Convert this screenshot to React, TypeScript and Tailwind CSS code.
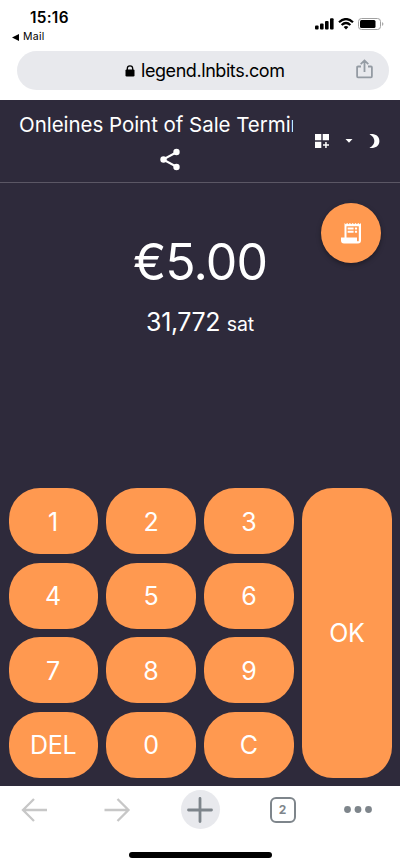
import React from 'react';

const keys = ['1', '2', '3', '4', '5', '6', '7', '8', '9', 'DEL', '0', 'C'];

function StatusBar() {
  return (
    <div className="flex h-[51px] justify-between pr-[16px] pl-[12px]">
      <div className="pt-[8px]">
        <div className="pl-[18px] text-[15.3px] leading-[19px] font-semibold tracking-[0.3px]">15:16</div>
        <div className="flex items-center gap-[4px] pt-[4px] text-[10.5px] leading-[12px] tracking-[0.25px]">
          <svg width="7" height="7" viewBox="0 0 7 7"><path d="M7 0v7L0 3.5z" /></svg>
          <span>Mail</span>
        </div>
      </div>
      <div className="flex h-[12px] items-center gap-[4px] mt-[18px]">
        <svg width="19" height="12" viewBox="0 0 19 12">
          <rect x="0" y="7.5" width="3.6" height="4" rx="1" />
          <rect x="5" y="5.5" width="3.6" height="6" rx="1" />
          <rect x="10" y="3" width="3.6" height="8.5" rx="1" />
          <rect x="15" y="0.3" width="3.6" height="11.2" rx="1" />
        </svg>
        <svg width="16" height="12" viewBox="0 0 16 12" fill="none" stroke="#000" strokeWidth="2.2">
          <path d="M1 4.2Q8-2.1 15 4.2" />
          <path d="M3.6 7Q8 3 12.4 7" />
          <path d="M8 11.5L5.6 9.1Q8 7 10.4 9.1z" fill="#000" stroke="none" />
        </svg>
        <svg width="26" height="12" viewBox="0 0 26 12">
          <rect x="0.5" y="0.5" width="22" height="11" rx="3" fill="none" stroke="#a0a0a0" />
          <rect x="2" y="2" width="15.5" height="8" rx="1.5" />
          <path d="M24.2 4q2.4 2 0 4z" fill="#999" />
        </svg>
      </div>
    </div>
  );
}

function AddressBar() {
  return (
    <div className="mr-[11px] ml-[17px] flex h-[39px] items-center rounded-full bg-[#e8e9ed] pr-[16px] pl-[108px]">
      <svg width="10" height="12" viewBox="0 0 10 12">
        <path d="M2.3 5V3.6a2.7 2.7 0 0 1 5.4 0V5" fill="none" stroke="#000" strokeWidth="1.3" />
        <rect x="0.5" y="4.4" width="9" height="7" rx="1.2" />
      </svg>
      <span className="ml-[6px] text-[18px] leading-[22px] tracking-[-0.43px]">legend.lnbits.com</span>
      <svg className="mb-[3px] ml-auto" width="17" height="20" viewBox="0 0 17 20" fill="none" stroke="#949ba3" strokeWidth="1.8">
        <path d="M5 7.5H2q-.9 0-.9.9v8.9q0 1 .9 1h13q.9 0 .9-1V8.400q0-.9-.9-.9h-3M8.500 13V1.500M4.700 5.200l3.800-3.800 3.800 3.800" />
      </svg>
    </div>
  );
}

function Header() {
  return (
    <header className="flex h-[83px] items-center border-b border-[#5b5765]">
      <div className="ml-[19px] flex h-full w-[274px] flex-col items-center pt-[11px]">
        <div className="w-full overflow-hidden text-[20.5px] leading-[28px] tracking-[-0.04px] whitespace-nowrap">
          Onleines Point of Sale Terminal
        </div>
        <svg className="mt-[8px] ml-[28px]" width="22" height="24" viewBox="0 0 22 24" fill="#fff">
          <path d="M18 5L4 12.500L18 20" fill="none" stroke="#fff" strokeWidth="2" />
          <circle cx="17.500" cy="5" r="3.200" /><circle cx="4.500" cy="12.500" r="3.200" /><circle cx="17.500" cy="20" r="3.200" />
        </svg>
      </div>
      <div className="ml-[22px] flex items-center">
        <svg width="14" height="14" viewBox="0 0 14 14" fill="#fff">
          <path d="M0 0h6.300v6.300H0zM7.700 0H14v6.300H7.700zM0 7.700h6.300V14H0zM10.200 8h1.500v2.300H14v1.500h-2.300V14h-1.500v-2.200H8v-1.500h2.200z" />
        </svg>
        <svg className="ml-[16px]" width="8" height="4" viewBox="0 0 8 4" fill="#fff"><path d="M.5 0h7L4 3.800z" /></svg>
        <svg className="ml-[16px]" width="11" height="16" viewBox="0 0 11 16" fill="#fff">
          <path d="M0.500 1.200C2 .6 10.400 .6 10.400 8S2 15.400 .5 14.800C7 11.500 7 4.500 .5 1.200z" />
        </svg>
      </div>
    </header>
  );
}

function ReceiptButton() {
  return (
    <button className="absolute top-[19.500px] right-[19px] flex size-[60px] items-center justify-center rounded-full bg-[#ff9950] shadow-[0_2px_5px_rgba(0,0,0,0.35)]">
      <svg width="20" height="22" viewBox="0 0 20 22">
        <path d="M3.500 1l1.300 1.200L6.100 1l1.400 1.200L8.900 1l1.400 1.200L11.700 1l1.400 1.200L14.500 1l1.400 1.200L17.300 1l1.400 1.200L20 1v17.500q0 3-3 3H3q-3 0-3-3V15.500h3.500z" fill="#fff" />
        <path d="M5.500 4.200h12.300v14.200q0 .9-.9.900t-.9-.9v-2.900H5.500z" fill="#ff9950" />
        <path d="M6.600 5.500h6v2h-6zM13.900 5.500h2.200v2h-2.200zM6.600 8.800h6v2h-6zM13.900 8.800h2.200v2h-2.200z" fill="#fff" />
      </svg>
    </button>
  );
}

function Keypad() {
  const key = 'flex items-center justify-center rounded-[31px] bg-[#ff9950] pt-[2px] text-[25px] leading-none';
  return (
    <div className="grid h-[289.500px] grid-cols-4 grid-rows-4 gap-[8.500px] px-[8.500px]">
      {keys.map((label, i) => (
        <button key={label} className={key + (i % 3 === 0 ? ' col-start-1' : '') + (label === 'DEL' ? ' tracking-[-0.2px]' : '')}>{label}</button>
      ))}
      <button className={key + ' col-start-4 row-span-4 row-start-1 tracking-[-0.5px]'}>OK</button>
    </div>
  );
}

function BrowserBar() {
  return (
    <footer className="flex h-[80px] flex-col">
      <div className="flex h-[47px] items-center pl-[21px]">
        <svg width="27" height="24" viewBox="0 0 27 24" fill="none" stroke="#c7c7c7" strokeWidth="2.300"><path d="M26 12H2M13 1L2 12L13 23" /></svg>
        <svg className="ml-[56px]" width="27" height="24" viewBox="0 0 27 24" fill="none" stroke="#c7c7c7" strokeWidth="2.300"><path d="M0.500 12H24.500M13.500 1L24.500 12L13.500 23" /></svg>
        <div className="ml-[49.500px] flex size-[39px] items-center justify-center rounded-full bg-[#e8e9ed]">
          <svg width="26" height="26" viewBox="0 0 26 26" stroke="#7e858b" strokeWidth="2.800" strokeLinecap="round"><path d="M1.500 13h23M13 1.500v23" /></svg>
        </div>
        <div className="ml-[50px] flex size-[26px] items-center justify-center rounded-[6px] border-2 border-[#7e858b] text-[12px] leading-none font-bold text-[#7e858b]">2</div>
        <svg className="ml-[48.500px]" width="28" height="7" viewBox="0 0 28 7" fill="#7e858b"><circle cx="3.500" cy="3.500" r="3.400" /><circle cx="14" cy="3.500" r="3.400" /><circle cx="24.500" cy="3.500" r="3.400" /></svg>
      </div>
      <div className="mt-[19px] ml-[128.500px] h-[5.500px] w-[143px] rounded-full bg-black" />
    </footer>
  );
}

export default function App() {
  return (
    <div className="flex h-[866px] w-[400px] flex-col overflow-hidden bg-white font-['Inter',sans-serif] text-black">
      <div className="h-[100px]"><StatusBar /><AddressBar /></div>
      <main className="flex h-[686px] flex-col bg-[#2e2a3b] text-white">
        <Header />
        <section className="relative flex h-[305.200px] flex-col items-center pt-[49px]">
          <div className="text-[50px] leading-[60px] font-normal tracking-[-0.900px]">€5.00</div>
          <div className="mt-[15px] text-[25px] leading-[30px] font-normal tracking-[-0.400px]">31,772 <span className="text-[19.500px] tracking-[-0.2px]">sat</span></div>
          <ReceiptButton />
        </section>
        <Keypad />
      </main>
      <BrowserBar />
    </div>
  );
}
